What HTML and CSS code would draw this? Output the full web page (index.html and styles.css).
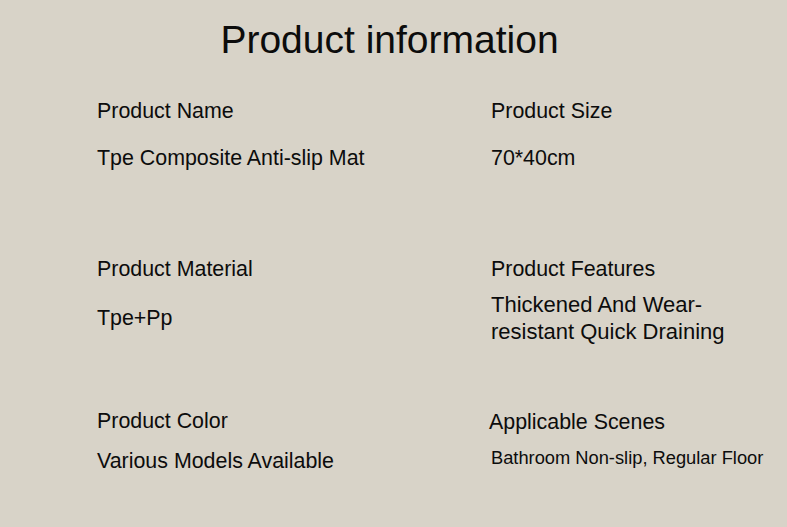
FILE: index.html
```html
<!DOCTYPE html>
<html>
<head>
<meta charset="utf-8">
<link rel="stylesheet" href="styles.css">
</head>
<body>
<div class="page">
  <h1 class="title">Product information</h1>
  <div class="grid">
    <div class="cell row1">
      <div class="label">Product Name</div>
      <div class="value">Tpe Composite Anti-slip Mat</div>
    </div>
    <div class="cell row1">
      <div class="label">Product Size</div>
      <div class="value">70*40cm</div>
    </div>
    <div class="cell row2">
      <div class="label">Product Material</div>
      <div class="value">Tpe+Pp</div>
    </div>
    <div class="cell row2">
      <div class="label">Product Features</div>
      <div class="value multi">Thickened And Wear-<br>resistant Quick Draining</div>
    </div>
    <div class="cell row3">
      <div class="label">Product Color</div>
      <div class="value">Various Models Available</div>
    </div>
    <div class="cell row3 shift">
      <div class="label">Applicable Scenes</div>
      <div class="value small">Bathroom Non-slip, Regular Floor</div>
    </div>
  </div>
</div>
</body>
</html>
```
FILE: styles.css
```css
html, body {
  margin: 0;
  padding: 0;
}
body {
  background: #d8d3c8;
  color: #0c0c0c;
  font-family: "Liberation Sans", Arial, sans-serif;
  width: 787px;
  height: 527px;
  overflow: hidden;
}
.page {
  padding-top: 18px;
}
.title {
  margin: 0;
  font-weight: normal;
  font-size: 39px;
  line-height: 44px;
  text-align: center;
  padding-right: 8px;
}
.grid {
  display: grid;
  grid-template-columns: 394px 1fr;
  padding-left: 97px;
  padding-top: 37px;
}
.cell {
  display: flex;
  flex-direction: column;
}
.label {
  font-size: 21.4px;
  line-height: 24px;
  height: 24px;
  white-space: nowrap;
}
.value {
  font-size: 21.4px;
  line-height: 24px;
  display: flex;
  align-items: center;
  white-space: nowrap;
}
.row1 .value {
  height: 70px;
}
.row1 {
  height: 158px;
}
.row2 {
  height: 152px;
}
.row2 .value {
  height: 74px;
}
.value.multi {
  display: block;
  font-size: 22px;
  line-height: 27px;
  padding-top: 10px;
  height: auto;
}
.row3 .value {
  height: 56px;
}
.shift .label {
  margin-left: -2px;
  margin-top: 1px;
}
.value.small {
  font-size: 18.3px;
  margin-top: -4px;
}
```
